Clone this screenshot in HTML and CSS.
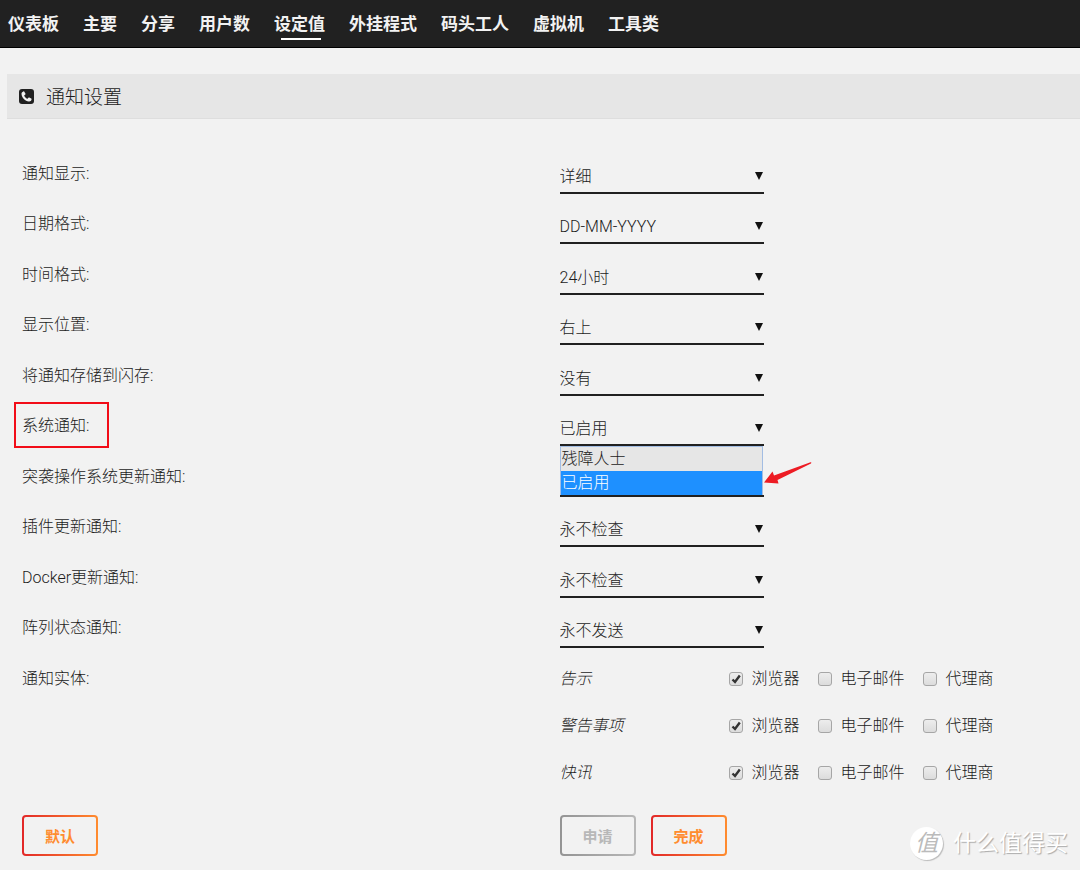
FILE: index.html
```html
<!DOCTYPE html>
<html lang="zh-CN">
<head>
<meta charset="utf-8">
<meta name="viewport" content="width=device-width, initial-scale=1">
<title>通知设置</title>
<link rel="stylesheet" href="styles.css">
</head>
<body>
<nav class="menu">
  <a href="#">仪表板</a>
  <a href="#">主要</a>
  <a href="#">分享</a>
  <a href="#">用户数</a>
  <a href="#" class="active" aria-current="page">设定值</a>
  <a href="#">外挂程式</a>
  <a href="#">码头工人</a>
  <a href="#">虚拟机</a>
  <a href="#">工具类</a>
</nav>
<main>
  <header class="title">
    <svg class="title-icon" viewBox="0 0 15 15" aria-hidden="true">
      <rect width="15" height="15" rx="3" fill="#212121"/>
      <path d="M4.400 2.400C3.100 2.800 2.400 3.700 2.500 5c.4 3.900 3.600 7.200 7.400 7.500 1.400.1 2.500-.7 2.700-2.200 0-.4-.1-.5-.4-.7L10.300 8.500c-.4-.2-.6-.1-.9.200l-.7.900c-.2.200-.4.200-.6.100C6.900 9.100 5.900 8 5.300 6.900c-.1-.3-.1-.4.1-.6l.9-.8c.2-.2.300-.4.2-.7L5.300 2.800c-.2-.4-.4-.5-.9-.4z" fill="#f2f2f2"/>
    </svg>
    <h1>通知设置</h1>
  </header>
  <form class="settings">
    <div class="row">
      <label for="display">通知显示:</label>
      <div class="pick"><select id="display"><option>详细</option></select></div>
    </div>
    <div class="row">
      <label for="date">日期格式:</label>
      <div class="pick"><select id="date"><option>DD-MM-YYYY</option></select></div>
    </div>
    <div class="row">
      <label for="time">时间格式:</label>
      <div class="pick"><select id="time"><option>24小时</option></select></div>
    </div>
    <div class="row">
      <label for="position">显示位置:</label>
      <div class="pick"><select id="position"><option>右上</option></select></div>
    </div>
    <div class="row">
      <label for="flash">将通知存储到闪存:</label>
      <div class="pick"><select id="flash"><option>没有</option></select></div>
    </div>
    <div class="row">
      <label for="system" class="marked">系统通知:</label>
      <div class="pick">
        <select id="system"><option>残障人士</option><option selected>已启用</option></select>
        <ul class="options" role="listbox" aria-label="系统通知">
          <li role="option" aria-selected="false">残障人士</li>
          <li role="option" aria-selected="true">已启用</li>
        </ul>
        <svg class="arrow" viewBox="0 0 48 22" aria-hidden="true">
          <path d="M0 20.500 8.500 9.500 10 13.500 46.500.300Q48 .200 47 1.600L13.500 18 14.500 21.500Z" fill="#ed1c24"/>
        </svg>
      </div>
    </div>
    <div class="row">
      <label for="os">突袭操作系统更新通知:</label>
      <div class="pick"><select id="os"><option></option></select></div>
    </div>
    <div class="row">
      <label for="plugin">插件更新通知:</label>
      <div class="pick"><select id="plugin"><option>永不检查</option></select></div>
    </div>
    <div class="row">
      <label for="docker">Docker更新通知:</label>
      <div class="pick"><select id="docker"><option>永不检查</option></select></div>
    </div>
    <div class="row">
      <label for="array">阵列状态通知:</label>
      <div class="pick"><select id="array"><option>永不发送</option></select></div>
    </div>
    <div class="entities">
      <span class="entities-name">通知实体:</span>
      <div>
        <div class="entity" role="group" aria-label="告示">
          <em>告示</em>
          <label><input type="checkbox" checked>浏览器</label>
          <label><input type="checkbox">电子邮件</label>
          <label><input type="checkbox">代理商</label>
        </div>
        <div class="entity" role="group" aria-label="警告事项">
          <em>警告事项</em>
          <label><input type="checkbox" checked>浏览器</label>
          <label><input type="checkbox">电子邮件</label>
          <label><input type="checkbox">代理商</label>
        </div>
        <div class="entity" role="group" aria-label="快讯">
          <em>快讯</em>
          <label><input type="checkbox" checked>浏览器</label>
          <label><input type="checkbox">电子邮件</label>
          <label><input type="checkbox">代理商</label>
        </div>
      </div>
    </div>
    <div class="actions">
      <div><button type="reset">默认</button></div>
      <div class="actions-main">
        <button type="submit" disabled>申请</button>
        <button type="button">完成</button>
      </div>
    </div>
  </form>
</main>
<div class="watermark"><span class="badge">值</span><span>什么值得买</span></div>
</body>
</html>
```
FILE: styles.css
```css
* {
  box-sizing: border-box;
}

body {
  position: relative;
  margin: 0;
  min-height: 100vh;
  background: #f2f2f2;
  color: #1c1b1b;
  font: 300 16px/24px Roboto, "Noto Sans CJK SC", sans-serif;
}

.menu {
  display: flex;
  gap: 24px;
  height: 48px;
  padding-left: 8px;
  background: #212121;
  border-bottom: 1px solid #000;
}

.menu a {
  position: relative;
  color: #f2f2f2;
  font-size: 17px;
  font-weight: 700;
  line-height: 49px;
  text-decoration: none;
  white-space: nowrap;
}

.menu .active::after {
  content: "";
  position: absolute;
  left: 7px;
  right: 4px;
  bottom: 7px;
  height: 2px;
  background: #fff;
}

.title {
  display: flex;
  align-items: center;
  gap: 12px;
  height: 45px;
  margin: 26px 0 0 7px;
  padding-left: 12px;
  background: #e6e6e6;
  border-bottom: 1px solid #dedede;
}

.title-icon {
  width: 15px;
  height: 15px;
}

.title h1 {
  margin: 0;
  padding-top: 3px;
  font-size: 19px;
  font-weight: 300;
}

.settings {
  padding: 31px 4px 14px 22px;
}

.row,
.entities,
.actions {
  display: grid;
  grid-template-columns: 51% 49%;
  align-items: start;
}

.row {
  height: 50px;
}

.row:nth-child(even) {
  height: 51px;
}

.row > label,
.entities-name {
  justify-self: start;
  line-height: 48px;
}

.marked {
  position: relative;
}

.marked::after {
  content: "";
  position: absolute;
  inset: 0 -20px 2px -8px;
  border: 2px solid #f20d18;
}

.pick {
  position: relative;
  width: 204px;
  padding-top: 7px;
}

.pick::after {
  content: "";
  position: absolute;
  right: 1px;
  top: 22px;
  border: 4px solid transparent;
  border-top: 8px solid #111;
  border-bottom: 0;
  pointer-events: none;
}

.pick select {
  display: block;
  width: 100%;
  height: 37px;
  margin: 0;
  padding: 4px 0 0;
  appearance: none;
  background: transparent;
  border: 0;
  border-bottom: 2px solid #212121;
  border-radius: 0;
  color: inherit;
  font: inherit;
}

.options {
  position: absolute;
  z-index: 1;
  top: 44px;
  left: 0;
  width: 203px;
  margin: 0;
  padding: 0;
  list-style: none;
  background: #e6e6e6;
  border: 1px solid #a3bde3;
  border-bottom: 0;
}

.options li {
  padding-left: 1px;
  line-height: 24px;
}

.options [aria-selected="true"] {
  background: #1e90ff;
  color: #fff;
}

.arrow {
  position: absolute;
  left: 204px;
  top: 60px;
  width: 48px;
  height: 22px;
}

.entity {
  display: flex;
  align-items: center;
  gap: 18px;
  height: 47px;
}

.entity em {
  width: 151px;
}

.entity label {
  display: flex;
  align-items: center;
  gap: 9px;
  white-space: nowrap;
}

.entity input {
  width: 14px;
  height: 14px;
  margin: 0;
  appearance: none;
  background: linear-gradient(#ededed, #dcdcdc);
  border: 1px solid #a6a6a6;
  border-radius: 3px;
}

.entity input:checked {
  background: url("data:image/svg+xml,%3Csvg xmlns='http://www.w3.org/2000/svg' viewBox='0 0 12 12'%3E%3Cpath d='M2.500 6.500 5 9 9.800 2.500' fill='none' stroke='%23333' stroke-width='2.400'/%3E%3C/svg%3E"), linear-gradient(#ededed, #dcdcdc);
}

.actions {
  margin-top: 19px;
}

.actions-main {
  display: flex;
  gap: 15px;
}

.actions button {
  width: 76px;
  height: 41px;
  padding: 2px 0 0;
  background: linear-gradient(#f2f2f2, #f2f2f2) padding-box, linear-gradient(90deg, #e22828, #ff8c2f) border-box;
  border: 2px solid transparent;
  border-radius: 4px;
  color: #ff8c2f;
  font: inherit;
  font-size: 15px;
  font-weight: 700;
}

.actions button:disabled {
  background: linear-gradient(#f2f2f2, #f2f2f2) padding-box, linear-gradient(90deg, #949494, #b8b8b8) border-box;
  color: #b8b8b8;
}

.watermark {
  position: absolute;
  right: 12px;
  bottom: 10px;
  display: flex;
  align-items: center;
  gap: 10px;
  color: #fff;
  font-size: 23px;
  font-weight: 400;
  line-height: 33px;
  text-shadow: 1px 1px 1px #aaa;
}

.badge {
  width: 33px;
  height: 33px;
  border-radius: 50%;
  background: #fff;
  box-shadow: 1px 1px 1px #bbb;
  color: #bbb;
  font-style: italic;
  text-align: center;
  text-shadow: none;
}
```
